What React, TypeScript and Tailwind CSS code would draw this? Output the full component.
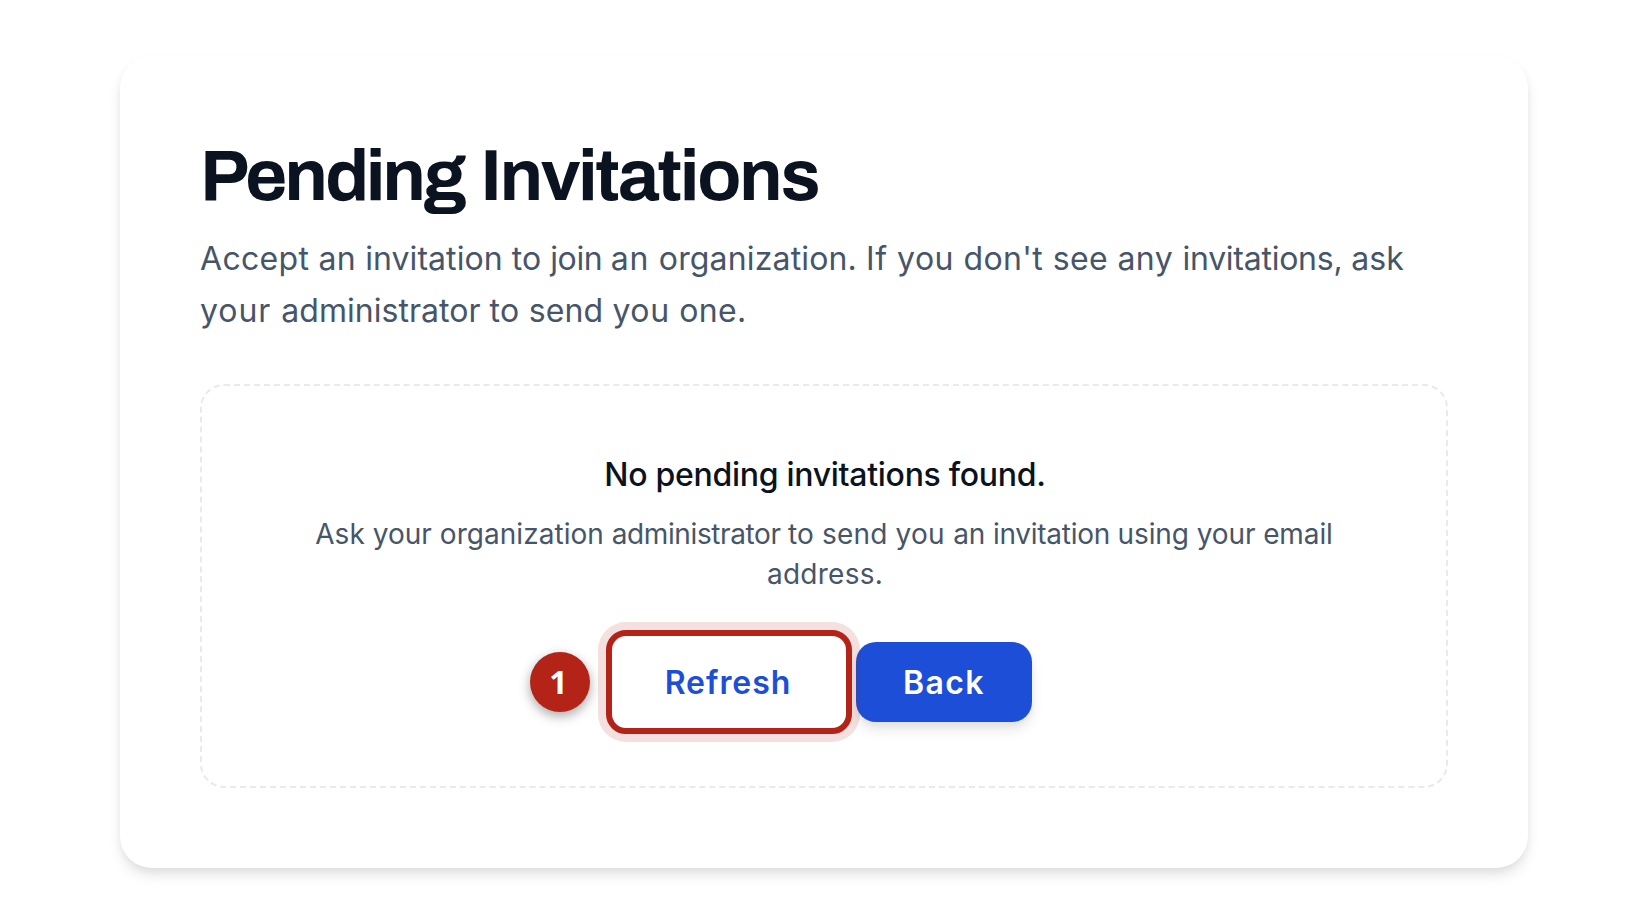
export default function App() {
  return (
    <main className="h-[924px] w-[1648px] bg-white px-[120px] pt-14 font-['Inter',sans-serif]">
      <section className="h-[812px] w-[1408px] rounded-[32px] bg-white p-20 shadow-[0_8px_14px_-1px_rgba(0,0,0,0.1),0_4px_8px_-2px_rgba(0,0,0,0.06)]">
        <h1 className="h-20 whitespace-nowrap font-['Archivo','Liberation_Sans',sans-serif] text-[72px] font-bold leading-[80px] text-[#0b1220]">
          <span className="mr-[2px] tracking-[-2.8px]">Pending</span> <span className="tracking-[-2.1px]">Invitations</span>
        </h1>
        <p className="mt-4 h-[104px] pt-px text-[32px] leading-[52px] text-[#475569]">
          <span className="block whitespace-nowrap tracking-[0.15px]">
            <span className="tracking-[0.3px]">Accept an </span>
            <span className="tracking-[0.06px]">invitation to </span>
            <span className="tracking-[-0.4px]">join </span>
            <span className="tracking-[0.7px]">an </span>
            <span>organization. </span>
            <span className="tracking-[0.5px]">If you </span>
            <span className="tracking-[0.4px]">don't see any </span>
            <span className="tracking-[-0.25px]">invitations, </span>
            <span>ask</span>
          </span>
          <span className="block whitespace-nowrap tracking-[0.33px]">
            <span className="tracking-[0.96px]">your </span>
            <span className="tracking-[0.03px]">administrator </span>
            <span>to </span>
            <span className="tracking-[0.1px]">send </span>
            <span className="tracking-[0.6px]">you </span>
            <span>one.</span>
          </span>
        </p>
        <div className="mt-12 h-[404px] rounded-3xl border-2 border-dashed border-[#e9e9ee] px-16 pt-16 text-center">
          <p className="h-12 pl-[2px] pt-px text-[32px] font-medium leading-[48px] tracking-[-0.29px] text-[#0b1220]">No pending invitations found.</p>
          <p className="mt-4 text-[28px] leading-[40px] text-[#475569]">
            <span className="block whitespace-nowrap tracking-[-0.095px]">
              <span className="tracking-[0.04px]">Ask your organization </span>
              <span className="tracking-[-0.4px]">administrator </span>
              <span className="tracking-[0.16px]">to send </span>
              <span className="tracking-[0.3px]">you </span>
              <span>an </span>
              <span className="tracking-[-0.28px]">invitation </span>
              <span>using your email</span>
            </span>
            <span className="block pl-[2px] tracking-[0.25px]">address.</span>
          </p>
          <div className="mt-9 flex items-center pl-[264px]">
            <span className="flex size-[60px] items-center justify-center rounded-full bg-[#b42318] pr-[3px] font-['Noto_Sans',sans-serif] text-[32px] font-bold text-white shadow-[0_4px_12px_rgba(0,0,0,0.35)]">1</span>
            <button className="relative z-10 ml-4 h-[104px] w-[246px] rounded-[20px] border-[6px] border-[#b42318] bg-white pr-[2px] pt-0.5 text-[32px] font-semibold tracking-[0.95px] text-[#1d4ed8] shadow-[0_0_0_8px_rgba(180,35,24,0.14)]">Refresh</button>
            <button className="ml-1 h-20 w-44 rounded-[20px] bg-[#1d4ed8] pt-0.5 text-[32px] font-semibold tracking-[1.4px] text-white shadow-[0_8px_14px_-1px_rgba(0,0,0,0.1),0_4px_8px_-2px_rgba(0,0,0,0.06)]">Back</button>
          </div>
        </div>
      </section>
    </main>
  );
}
